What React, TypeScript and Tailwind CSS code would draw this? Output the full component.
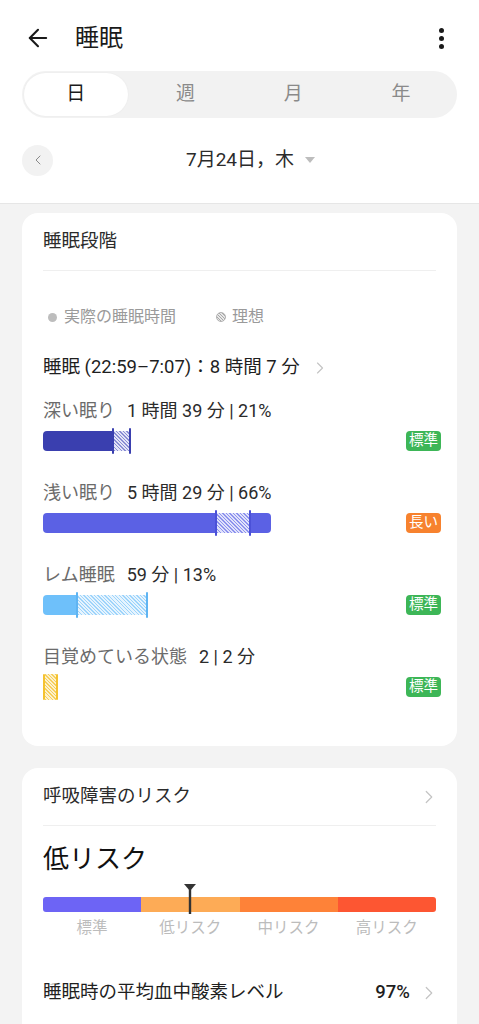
import { ArrowLeft, ChevronLeft, ChevronRight } from 'lucide-react'

const font = "font-[Roboto,'Noto_Sans_CJK_JP',sans-serif]"

function Badge({ label, tone }: { label: string; tone: 'green' | 'orange' }) {
  const bg = tone === 'green' ? 'bg-[#3db657]' : 'bg-[#f7822e]'
  return (
    <span className={`${bg} mr-[-5px] h-[20px] px-[3px] rounded-[4px] text-white text-[14.5px] leading-[20px]`}>
      {label}
    </span>
  )
}

function StageRow({ label, value, badge, tone, children, first }: {
  label: string
  value: string
  badge: string
  tone: 'green' | 'orange'
  children: React.ReactNode
  first?: boolean
}) {
  return (
    <div className={first ? 'mt-[22px]' : 'mt-[30px]'}>
      <div className="h-[20px] flex items-center gap-[12px] text-[18px]">
        <span className="text-[#6b6b6b]">{label}</span>
        <span className="text-[#2b2b2b]">{value}</span>
      </div>
      <div className="mt-[10px] h-[22px] flex items-center justify-between">
        <div className="flex items-center">{children}</div>
        <Badge label={badge} tone={tone} />
      </div>
    </div>
  )
}

export default function App() {
  const mark = 'w-[2px] h-[26px] rounded-full'

  return (
    <div className={`${font} w-[479px] min-h-[1024px] bg-[#f3f3f3] text-[#222]`}>
      {/* Header */}
      <div className="bg-white border-b border-[#e6e6e6]">
        <div className="h-[71px] pt-[5px] flex items-center px-[24px]">
          <ArrowLeft className="size-[28px] text-[#1a1a1a]" strokeWidth={1.8} />
          <span className="ml-[23px] text-[24px] text-[#1a1a1a]">睡眠</span>
          <div className="ml-auto mr-[11px] flex flex-col gap-[3px] items-center">
            <span className="size-[5px] rounded-full bg-[#1a1a1a]" />
            <span className="size-[5px] rounded-full bg-[#1a1a1a]" />
            <span className="size-[5px] rounded-full bg-[#1a1a1a]" />
          </div>
        </div>

        {/* Tabs */}
        <div className="mx-[22px] h-[47px] rounded-full bg-[#f2f2f2] p-[2px] grid grid-cols-4 text-[19px]">
          <div className="mr-[4px] rounded-full bg-white flex items-center justify-center text-[#1a1a1a] shadow-[0_0_2px_rgba(0,0,0,0.05)]">日</div>
          <div className="flex items-center justify-center text-[#8a8a8a]">週</div>
          <div className="flex items-center justify-center text-[#8a8a8a]">月</div>
          <div className="flex items-center justify-center text-[#8a8a8a]">年</div>
        </div>

        {/* Date */}
        <div className="mt-[11px] mb-[12px] h-[62px] px-[22px] flex items-center relative">
          <div className="size-[31px] rounded-full bg-[#f2f2f2] flex items-center justify-center">
            <ChevronLeft className="size-[16px] text-[#8a8a8a]" strokeWidth={1.5} />
          </div>
          <div className="absolute left-0 right-0 flex items-center justify-center pl-[22px] pointer-events-none">
            <span className="text-[19px] text-[#2b2b2b]">7月24日，木</span>
            <svg width="10" height="7" viewBox="0 0 10 7" className="ml-[11px]">
              <path d="M0 0 L10 0 L5 6 Z" fill="#bdbdbd" />
            </svg>
          </div>
        </div>
      </div>

      {/* Sleep stages card */}
      <div className="mt-[9px] mx-[22px] rounded-[16px] bg-white px-[21px] pb-[48px]">
        <div className="h-[58px] flex items-center border-b border-[#efefef] text-[18.5px] text-[#2b2b2b]">
          睡眠段階
        </div>

        <div className="mt-[36px] h-[20px] flex items-center text-[16px] text-[#9a9a9a]">
          <span className="ml-[5px] size-[9px] rounded-full bg-[#bdbdbd]" />
          <span className="ml-[7px]">実際の睡眠時間</span>
          <span className="ml-[40px] size-[10px] rounded-full border border-[#b0b0b0] bg-[image:repeating-linear-gradient(45deg,#a8a8a8_0px,#a8a8a8_1px,#e8e8e8_1px,#e8e8e8_2.2px)]" />
          <span className="ml-[6px]">理想</span>
        </div>

        <div className="mt-[31px] h-[20px] flex items-center text-[18.5px] text-[#1f1f1f]">
          <span>睡眠 (22:59–7:07)：8 時間 7 分</span>
          <ChevronRight className="ml-[10px] size-[20px] text-[#c4c4c4]" strokeWidth={1.4} />
        </div>

        <StageRow first label="深い眠り" value="1 時間 39 分 | 21%" badge="標準" tone="green">
          <div className="w-[69px] h-[20px] rounded-l-[4px] bg-[#3a3faf]" />
          <div className={`${mark} bg-[#3a3faf]`} />
          <div className="w-[15px] h-[20px] bg-[image:repeating-linear-gradient(45deg,#8a8dd4_0px,#8a8dd4_1px,#e3e4f7_1px,#e3e4f7_2.5px)]" />
          <div className={`${mark} bg-[#3a3faf]`} />
        </StageRow>

        <StageRow label="浅い眠り" value="5 時間 29 分 | 66%" badge="長い" tone="orange">
          <div className="w-[172px] h-[20px] rounded-l-[4px] bg-[#5b61e4]" />
          <div className={`${mark} bg-[#4b51d8]`} />
          <div className="w-[32px] h-[20px] bg-[image:repeating-linear-gradient(45deg,#8d92ee_0px,#8d92ee_1px,#e0e2fb_1px,#e0e2fb_2.5px)]" />
          <div className={`${mark} bg-[#4b51d8]`} />
          <div className="w-[20px] h-[20px] rounded-r-[4px] bg-[#5b61e4]" />
        </StageRow>

        <StageRow label="レム睡眠" value="59 分 | 13%" badge="標準" tone="green">
          <div className="w-[33px] h-[20px] rounded-l-[4px] bg-[#6ec0fa]" />
          <div className={`${mark} bg-[#5fb4f2]`} />
          <div className="w-[68px] h-[20px] bg-[image:repeating-linear-gradient(45deg,#9ed4fb_0px,#9ed4fb_1px,#e6f4fe_1px,#e6f4fe_2.5px)]" />
          <div className={`${mark} bg-[#5fb4f2]`} />
        </StageRow>

        <StageRow label="目覚めている状態" value="2 | 2 分" badge="標準" tone="green">
          <div className="w-[2px] h-[26px] rounded-full bg-[#f4c22f]" />
          <div className="w-[11px] h-[26px] bg-[image:repeating-linear-gradient(45deg,#f6cf5c_0px,#f6cf5c_1px,#fdf1cc_1px,#fdf1cc_2.5px)]" />
          <div className="w-[2px] h-[26px] rounded-full bg-[#f4c22f]" />
        </StageRow>
      </div>

      {/* Breathing risk card */}
      <div className="mt-[22px] mx-[22px] rounded-t-[16px] bg-white px-[21px] pb-[30px]">
        <div className="h-[58px] flex items-center justify-between border-b border-[#efefef] text-[18.5px] text-[#2b2b2b]">
          <span>呼吸障害のリスク</span>
          <ChevronRight className="mr-[-4px] size-[22px] text-[#c4c4c4]" strokeWidth={1.3} />
        </div>

        <div className="mt-[16px] h-[34px] flex items-center text-[26px] text-[#111]">低リスク</div>

        <div className="relative mt-[21px]">
          <div className="h-[15px] rounded-[3px] overflow-hidden grid grid-cols-4">
            <div className="bg-[#6d64f5]" />
            <div className="bg-[#fdab56]" />
            <div className="bg-[#fe8238]" />
            <div className="bg-[#fd5632]" />
          </div>
          <svg width="12" height="30" viewBox="0 0 12 30" className="absolute left-[141px] top-[-13px]">
            <path d="M0 0 H12 L6.8 6 H5.2 Z" fill="#333" />
            <rect x="4.8" y="4" width="2.4" height="26" fill="#333" />
          </svg>
        </div>

        <div className="mt-[5px] h-[18px] grid grid-cols-4 items-center text-[15.5px] text-[#bcbcbc] text-center">
          <span>標準</span>
          <span>低リスク</span>
          <span>中リスク</span>
          <span>高リスク</span>
        </div>

        <div className="mt-[48px] h-[20px] flex items-center text-[18.5px] text-[#1f1f1f]">
          <span>睡眠時の平均血中酸素レベル</span>
          <span className="ml-auto mr-[2px] font-medium">97%</span>
          <ChevronRight className="ml-[6px] mr-[-4px] size-[22px] text-[#c4c4c4]" strokeWidth={1.3} />
        </div>
      </div>
    </div>
  )
}
